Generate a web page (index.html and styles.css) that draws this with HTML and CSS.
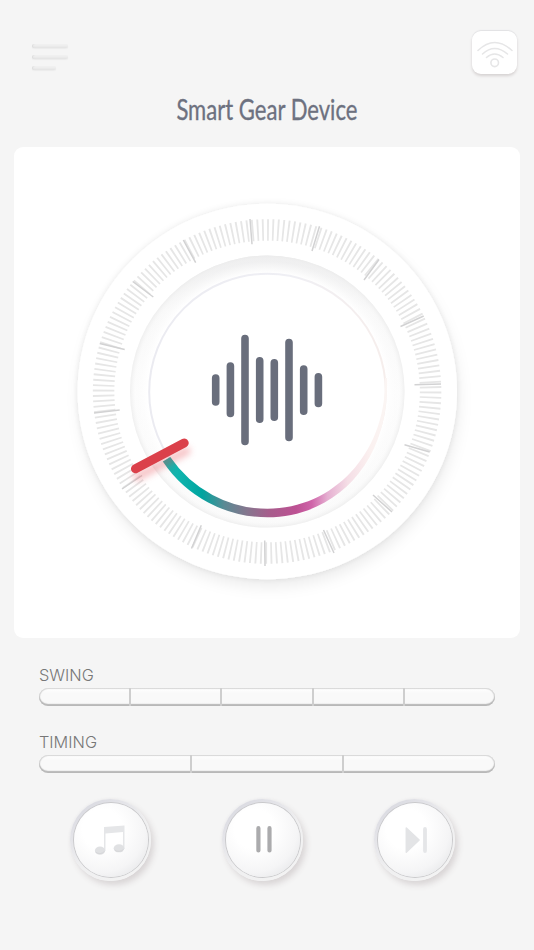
FILE: index.html
```html
<!DOCTYPE html>
<html lang="en">
<head>
    <meta charset="UTF-8">
    <meta name="viewport" content="width=device-width, initial-scale=1.0">
    <title>Smart Gear Device</title>
    <link rel="stylesheet" href="styles.css">
</head>
<body>
    <header class="top-bar">
        <button class="menu-button" aria-label="Menu">
            <span class="menu-line"></span>
            <span class="menu-line"></span>
            <span class="menu-line short"></span>
        </button>
        <button class="wifi-button" aria-label="Wi-Fi">
            <svg width="46" height="43" viewBox="0 0 46 43" fill="none" stroke="#e6e6e7" stroke-width="1.6" stroke-linecap="round">
                <path d="M6 19.5 Q22.5 3.5 40 19.5"/>
                <path d="M10.5 23 Q22.5 12 35.5 23"/>
                <path d="M14.5 26.5 Q22.5 19.5 31 26.5"/>
                <circle cx="22.7" cy="31.8" r="3.8"/>
            </svg>
        </button>
    </header>

    <h1 class="title">
        <svg width="184" height="32" viewBox="0 0 184 32">
            <text x="0.4" y="24.8" textLength="181" lengthAdjust="spacingAndGlyphs">Smart Gear Device</text>
        </svg>
    </h1>

    <main class="dial-card">
        <svg class="dial" width="506" height="491" viewBox="14 147 506 491">
            <defs>
                <linearGradient id="well" x1="0" y1="0" x2="0" y2="1">
                    <stop offset="0" stop-color="#e9e9ea"/>
                    <stop offset="0.2" stop-color="#f8f8f8"/>
                    <stop offset="0.5" stop-color="#fdfdfd"/>
                    <stop offset="1" stop-color="#fafafa"/>
                </linearGradient>
                <radialGradient id="well-edge">
                    <stop offset="0.87" stop-color="#fff" stop-opacity="1"/>
                    <stop offset="0.96" stop-color="#fafafa" stop-opacity="0.3"/>
                    <stop offset="1" stop-color="#ececec" stop-opacity="0.8"/>
                </radialGradient>
                <linearGradient id="track" x1="149" y1="0" x2="386" y2="0" gradientUnits="userSpaceOnUse">
                    <stop offset="0" stop-color="#ebebf1"/>
                    <stop offset="0.6" stop-color="#efeff4"/>
                    <stop offset="1" stop-color="#f6eeec"/>
                </linearGradient>
                <linearGradient id="level" x1="164" y1="0" x2="388" y2="0" gradientUnits="userSpaceOnUse">
                    <stop offset="0" stop-color="#28aaa5"/>
                    <stop offset="0.06" stop-color="#10b5ae"/>
                    <stop offset="0.17" stop-color="#00a49f"/>
                    <stop offset="0.27" stop-color="#5b8a94"/>
                    <stop offset="0.37" stop-color="#85768e"/>
                    <stop offset="0.47" stop-color="#a75d8c"/>
                    <stop offset="0.59" stop-color="#bd5193"/>
                    <stop offset="0.66" stop-color="#cf65a9"/>
                    <stop offset="0.73" stop-color="#e5afd1"/>
                    <stop offset="0.82" stop-color="#f5dee6"/>
                    <stop offset="0.92" stop-color="#fbf1f0"/>
                    <stop offset="1" stop-color="#fbf6f4"/>
                </linearGradient>
                <filter id="ring-shadow" x="-20%" y="-20%" width="140%" height="140%">
                    <feDropShadow dx="0" dy="0" stdDeviation="3" flood-color="#000" flood-opacity="0.09"/>
                    <feDropShadow dx="2" dy="8" stdDeviation="7" flood-color="#000" flood-opacity="0.07"/>
                </filter>
                <filter id="needle-shadow" x="-30%" y="-50%" width="160%" height="220%" color-interpolation-filters="sRGB">
                    <feDropShadow dx="2" dy="8" stdDeviation="3" flood-color="#e5414b" flood-opacity="0.3"/>
                </filter>
            </defs>

            <!-- outer ring -->
            <ellipse cx="267.3" cy="391.5" rx="189.7" ry="187.7" fill="#fff" filter="url(#ring-shadow)"/>
            <!-- minor ticks -->
            <ellipse class="minor" cx="267.1" cy="391.5" rx="163.5" ry="161.6" pathLength="800"/>
            <!-- major ticks -->
            <path class="major" d="M250 219L252 244.3 M183.3 240L195.7 262.7 M132.7 281.5L153.3 297
                M99.7 343.5L124.7 349.5 M94 413L119.7 410 M122 489L142 475.5 M191.5 548.5L201.3 525.3
                M265 566L264.7 540.5 M319.5 226.3L312 251 M379 259.5L364 280 M423.7 316L400.5 326.5
                M441 384L414.5 384.7 M429.7 452L404.5 444.7 M392 512L373 495 M334 553L323.5 530"/>

            <!-- recessed well -->
            <ellipse cx="267.3" cy="391.6" rx="137.3" ry="136" fill="url(#well)"/>
            <ellipse cx="267.3" cy="391.6" rx="137.3" ry="136" fill="url(#well-edge)"/>
            <circle cx="267.5" cy="392" r="118.3" fill="#fff" stroke="url(#track)" stroke-width="2"/>

            <!-- level arc -->
            <path fill="url(#level)" d="M162.8 461.5 A126 126 0 0 0 267.5 517.3 C332 517.3 390 466 387 378
                L385 378 C387 451 335 508.8 267.5 508.8 A118 118 0 0 1 170.3 457 Z"/>
            <path d="M135.5 468.8 L184.2 443" stroke="#db404a" stroke-width="9" stroke-linecap="round" filter="url(#needle-shadow)"/>

            <!-- sound wave -->
            <path class="wave" d="M215.7 378V402 M230.4 366V413.5 M245 338.5V441.5 M259.7 360.7V419.3
                M274.3 362.7V417.3 M289 342.5V437.5 M303.7 369V411.3 M318.4 376.7V403.5"/>
        </svg>
    </main>

    <section class="slider">
        <div class="slider-label">SWING</div>
        <div class="slider-track">
            <span class="step"></span>
            <span class="step"></span>
            <span class="step"></span>
            <span class="step"></span>
            <span class="step"></span>
        </div>
    </section>

    <section class="slider">
        <div class="slider-label">TIMING</div>
        <div class="slider-track">
            <span class="step"></span>
            <span class="step"></span>
            <span class="step"></span>
        </div>
    </section>

    <footer class="controls">
        <button class="round-button" aria-label="Music">
            <svg class="knob" width="74" height="74" viewBox="0 0 74 74">
                <path d="M30 24 L50.5 22.5 V46 H49 V29 L31.5 30.5 V48 H30 Z" fill="#e5e6e8"/>
                <ellipse cx="26" cy="47.7" rx="5.1" ry="4.1" fill="#e0e1e3"/>
                <ellipse cx="45" cy="45.3" rx="5.3" ry="4" fill="#e0e1e3"/>
                <path d="M21.5 49 Q26 52.5 30.5 48.5 M40.5 47 Q45 50 49.5 46.5" fill="none" stroke="#d2d3d5" stroke-width="0.8"/>
            </svg>
        </button>
        <button class="round-button" aria-label="Pause">
            <svg class="knob" width="74" height="74" viewBox="0 0 74 74">
                <path d="M32.4 25.2 V47.5 M43.5 25.2 V47.5" fill="none" stroke="#ababad" stroke-width="4.2" stroke-linecap="round"/>
            </svg>
        </button>
        <button class="round-button" aria-label="Next">
            <svg class="knob" width="74" height="74" viewBox="0 0 74 74">
                <path d="M28.3 25 L41.1 37 L28.3 49.3 Z" fill="#e3e4e6" stroke="#e3e4e6" stroke-width="1.5" stroke-linejoin="round"/>
                <path d="M47 26 V48" fill="none" stroke="#e5e6e8" stroke-width="3.8" stroke-linecap="round"/>
            </svg>
        </button>
    </footer>
</body>
</html>
```
FILE: styles.css
```css
* {
    box-sizing: border-box;
}

body {
    margin: 0;
    width: 534px;
    height: 950px;
    overflow: hidden;
    background: #f5f5f5;
    font-family: Inter, "Liberation Sans", sans-serif;
}

button {
    border: none;
    padding: 0;
    background: none;
    cursor: pointer;
}

.top-bar {
    display: flex;
    justify-content: space-between;
    align-items: flex-start;
    height: 93px;
    padding: 31px 17px 0 32px;
}

.menu-button {
    display: flex;
    flex-direction: column;
    gap: 7px;
    padding-top: 13px;
}

.menu-line {
    width: 36px;
    height: 4px;
    border-radius: 2px;
    background: linear-gradient(#f4f4f4, #e4e4e4);
    box-shadow: inset 1px 0 1px #dcdcdc, 0 1px 1px #ececec;
}

.menu-line.short {
    width: 24px;
}

.wifi-button {
    width: 45px;
    height: 43px;
    border-radius: 9px;
    background: #fff;
    box-shadow: 0 -1px 1px #e2e2e4, 0 2px 3px #d6d2d2;
}

.wifi-button svg {
    display: block;
}

.title {
    margin: 0;
    height: 54px;
    padding-left: 176px;
}

.title svg {
    display: block;
    padding-top: 2px;
    height: 34px;
    overflow: visible;
}

.title text {
    font-family: Lato, sans-serif;
    font-size: 29px;
    font-weight: 400;
    fill: #6d7180;
    stroke: #6d7180;
    stroke-width: 0.35;
}

.dial-card {
    width: 506px;
    height: 491px;
    margin: 0 0 27px 14px;
    border-radius: 9px;
    background: #fff;
}

.dial {
    display: block;
}

.minor {
    fill: none;
    stroke: #e6e6e6;
    stroke-width: 21.5;
    stroke-dasharray: 1.4 2.6;
}

.major {
    stroke: #d2d2d3;
    stroke-width: 1.5;
}

.wave {
    stroke: #696e7c;
    stroke-width: 7.6;
    stroke-linecap: round;
}

.slider {
    height: 67px;
    padding: 0 39px;
}

.slider-label {
    height: 23px;
    line-height: 20px;
    font-size: 16.3px;
    font-weight: 300;
    color: #777;
}

.slider-track {
    display: flex;
    width: 456px;
    height: 18px;
    border-radius: 9px;
    background: linear-gradient(#fff, #f9f9f9 30%, #f9f9f9 80%, #eee);
    box-shadow: inset 0 1px 1px #d8d8d8, inset 0 -2px 1px #b8b8b8, inset 1px 0 1px #d0d0d0, inset -1px 0 1px #d0d0d0;
}

.step {
    flex: 1;
}

.step + .step {
    border-left: 2px solid #cecece;
}

.controls {
    display: flex;
    gap: 71px;
    padding-left: 70px;
}

.round-button {
    display: flex;
    justify-content: center;
    align-items: center;
    width: 81px;
    height: 82px;
    border-radius: 50%;
    background: linear-gradient(145deg, #d3d4dc, #e2e2e7 25%, #efeff0 55%, #f4f4f4);
    box-shadow: 3px 4px 6px #d8d4d5, -1px -1px 2px #f0f0f1;
}

.knob {
    border-radius: 50%;
    background: radial-gradient(circle at 38% 35%, #fff 30%, #f5f5f6 65%, #dcdde0 100%);
    box-shadow: 0 0 0 1px #c9c9cb;
}
```
